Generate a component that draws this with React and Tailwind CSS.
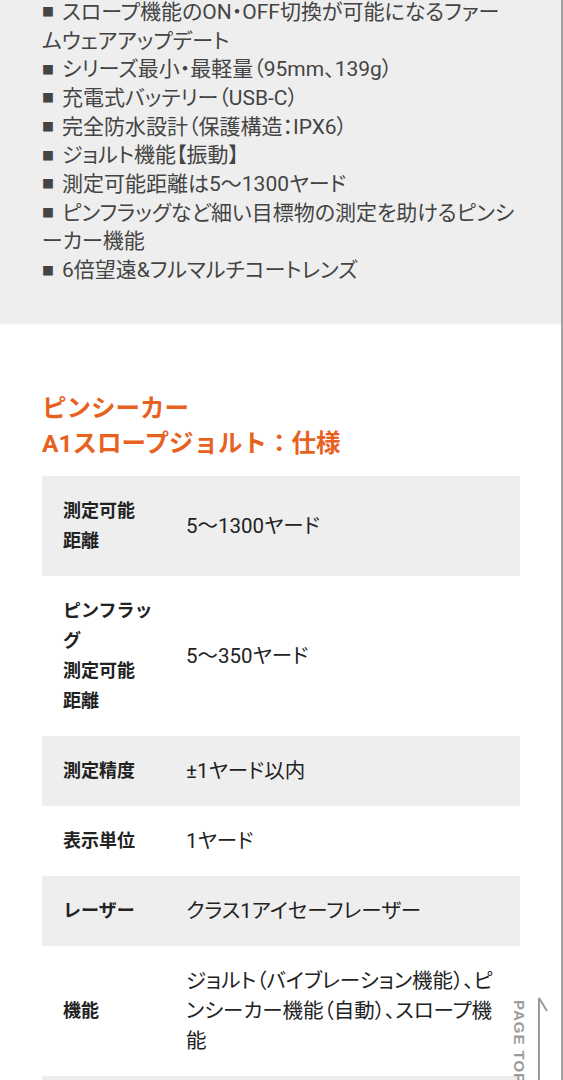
const features = [
  ["スロープ機能のON・OFF切換が可能になるファー", "ムウェアアップデート"],
  ["シリーズ最小・最軽量（95mm、139g）"],
  ["充電式バッテリー（USB-C）"],
  ["完全防水設計（保護構造：IPX6）"],
  ["ジョルト機能【振動】"],
  ["測定可能距離は5〜1300ヤード"],
  ["ピンフラッグなど細い目標物の測定を助けるピンシ", "ーカー機能"],
  ["6倍望遠&フルマルチコートレンズ"],
];

const specs = [
  { label: ["測定可能", "距離"], value: ["5〜1300ヤード"] },
  { label: ["ピンフラッ", "グ", "測定可能", "距離"], value: ["5〜350ヤード"] },
  { label: ["測定精度"], value: ["±1ヤード以内"] },
  { label: ["表示単位"], value: ["1ヤード"] },
  { label: ["レーザー"], value: ["クラス1アイセーフレーザー"] },
  {
    label: ["機能"],
    value: [
      "ジョルト（バイブレーション機能）、ピ",
      "ンシーカー機能（自動）、スロープ機",
      "能",
    ],
  },
  { label: [], value: [] },
];

const App = () => {
  return (
    <div className="relative h-[1080px] overflow-hidden bg-white border-r-2 border-[#a3a3a3] font-['Roboto','Noto_Sans_CJK_JP',sans-serif]">
      <section className="bg-[#eeeeee] px-[42px] pb-[38px] border-b-2 border-[#f4f4f4]">
        <div className="-mt-[2px] text-[21px] leading-[28.7px] text-[#444] whitespace-nowrap [font-feature-settings:'palt']">
          {features.map((item, i) => (
            <p key={i}>
              {item.map((line, j) => (
                <span key={j} className="flex items-center h-[28.7px]">
                  {j === 0 && (
                    <span className="w-[20px] shrink-0 text-[12px] leading-none pt-[2px]">■</span>
                  )}
                  <span className="leading-none">{line}</span>
                </span>
              ))}
            </p>
          ))}
        </div>
      </section>

      <section className="px-[42px] pt-[66px]">
        <h2 className="text-[24.5px] leading-[35px] font-bold text-[#e8621f]">
          ピンシーカー
          <br />
          A1スロープジョルト：仕様
        </h2>

        <div className="mt-[15px] w-[478px]">
          {specs.map((row, i) => (
            <div
              key={i}
              className={`flex py-5 text-[#222] ${
                i % 2 === 0 ? "bg-[#eeeeee]" : "bg-white"
              }`}
            >
              <div className="w-[144px] shrink-0 pl-[21px] flex flex-col justify-center text-[18px] font-bold">
                {row.label.map((l, j) => (
                  <span key={j} className="flex items-center h-[30px] leading-none">
                    {l}
                  </span>
                ))}
              </div>
              <div className="flex-1 flex flex-col justify-center text-[20.5px] whitespace-nowrap [font-feature-settings:'palt']">
                {row.value.map((v, j) => (
                  <span key={j} className="flex items-center h-[30px] leading-none">
                    {v}
                  </span>
                ))}
              </div>
            </div>
          ))}
        </div>
      </section>

      {/* page top */}
      <div className="absolute left-[507px] top-[997px] flex items-start gap-[5px]">
        <span className="mt-[3px] [writing-mode:vertical-rl] text-[15px] font-bold tracking-[1px] text-[#9b9b9b] font-['Liberation_Sans',sans-serif]">
          PAGE TOP
        </span>
        <svg width="16" height="100" viewBox="0 0 16 100">
          <path d="M4 1V100M4 1L12 14" stroke="#9b9b9b" strokeWidth="2" fill="none" />
        </svg>
      </div>
    </div>
  );
};

export default App;
